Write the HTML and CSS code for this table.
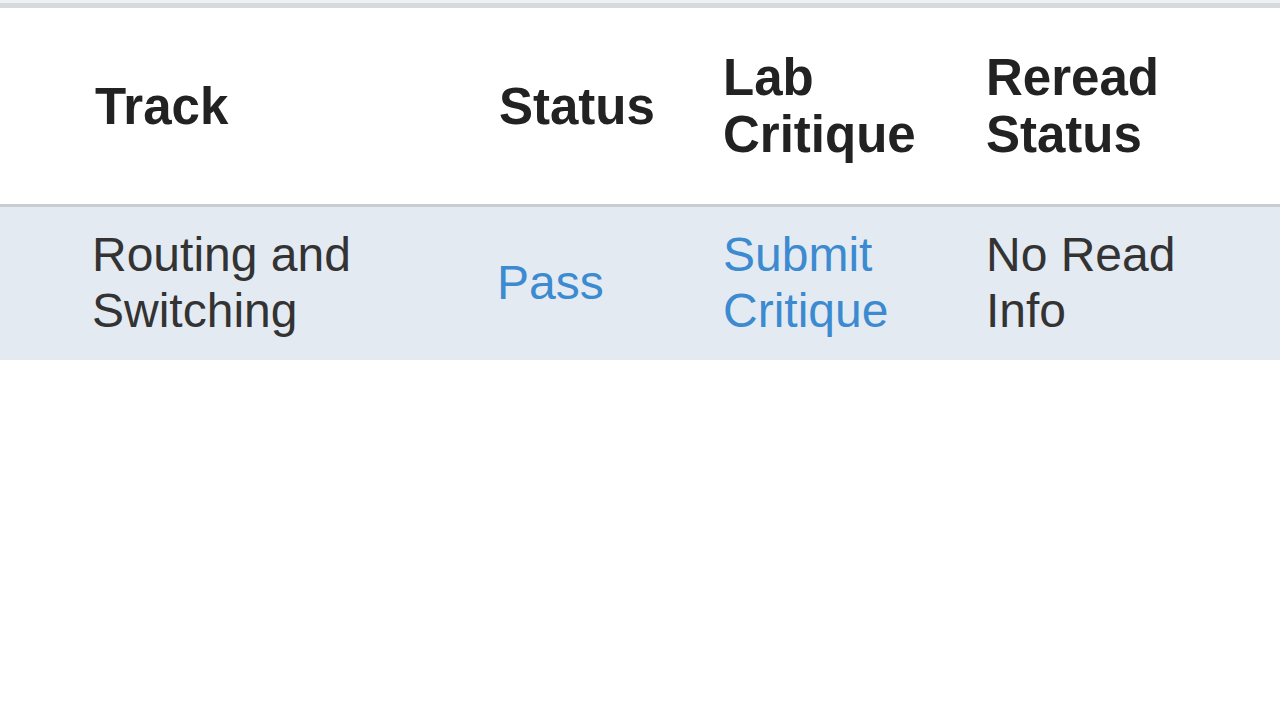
FILE: index.html
```html
<!DOCTYPE html>
<html lang="en">
<head>
<meta charset="utf-8">
<title>Track Results</title>
<link rel="stylesheet" href="styles.css">
</head>
<body>
<div class="page">
  <table class="results">
    <colgroup>
      <col class="c-track">
      <col class="c-status">
      <col class="c-lab">
      <col class="c-reread">
    </colgroup>
    <thead>
      <tr>
        <th class="first">Track</th>
        <th class="status">Status</th>
        <th>Lab<br>Critique</th>
        <th>Reread<br>Status</th>
      </tr>
    </thead>
    <tbody>
      <tr>
        <td class="first">Routing and<br>Switching</td>
        <td><a href="#">Pass</a></td>
        <td><a href="#">Submit<br>Critique</a></td>
        <td>No Read<br>Info</td>
      </tr>
    </tbody>
  </table>
</div>
</body>
</html>
```

FILE: styles.css
```css
html, body {
  margin: 0;
  padding: 0;
  background: #ffffff;
}

.page {
  padding-top: 3px;
  background: linear-gradient(#eef0f1, #eef0f1) top / 100% 3px no-repeat;
}

.results {
  width: 1280px;
  border-collapse: collapse;
  table-layout: fixed;
  font-family: "Liberation Sans", Arial, sans-serif;
  border-top: 5px solid #d5dade;
}

.c-track { width: 497px; }
.c-status { width: 226px; }
.c-lab { width: 263px; }
.c-reread { width: 294px; }

.results th {
  text-align: left;
  vertical-align: middle;
  font-size: 51px;
  font-weight: bold;
  line-height: 57px;
  color: #222222;
  padding: 41px 0 41px 0;
  border-bottom: 3px solid #c9cdd1;
}

.results th.first {
  padding-left: 95px;
}

.results th.status {
  padding-left: 2px;
}

.results td {
  text-align: left;
  vertical-align: middle;
  font-size: 48px;
  line-height: 56px;
  color: #333333;
  background: #e4eaf2;
  padding: 20px 0 21px 0;
}

.results td.first {
  padding-left: 92px;
}

.results a {
  color: #3c8ad0;
  text-decoration: none;
}
```
